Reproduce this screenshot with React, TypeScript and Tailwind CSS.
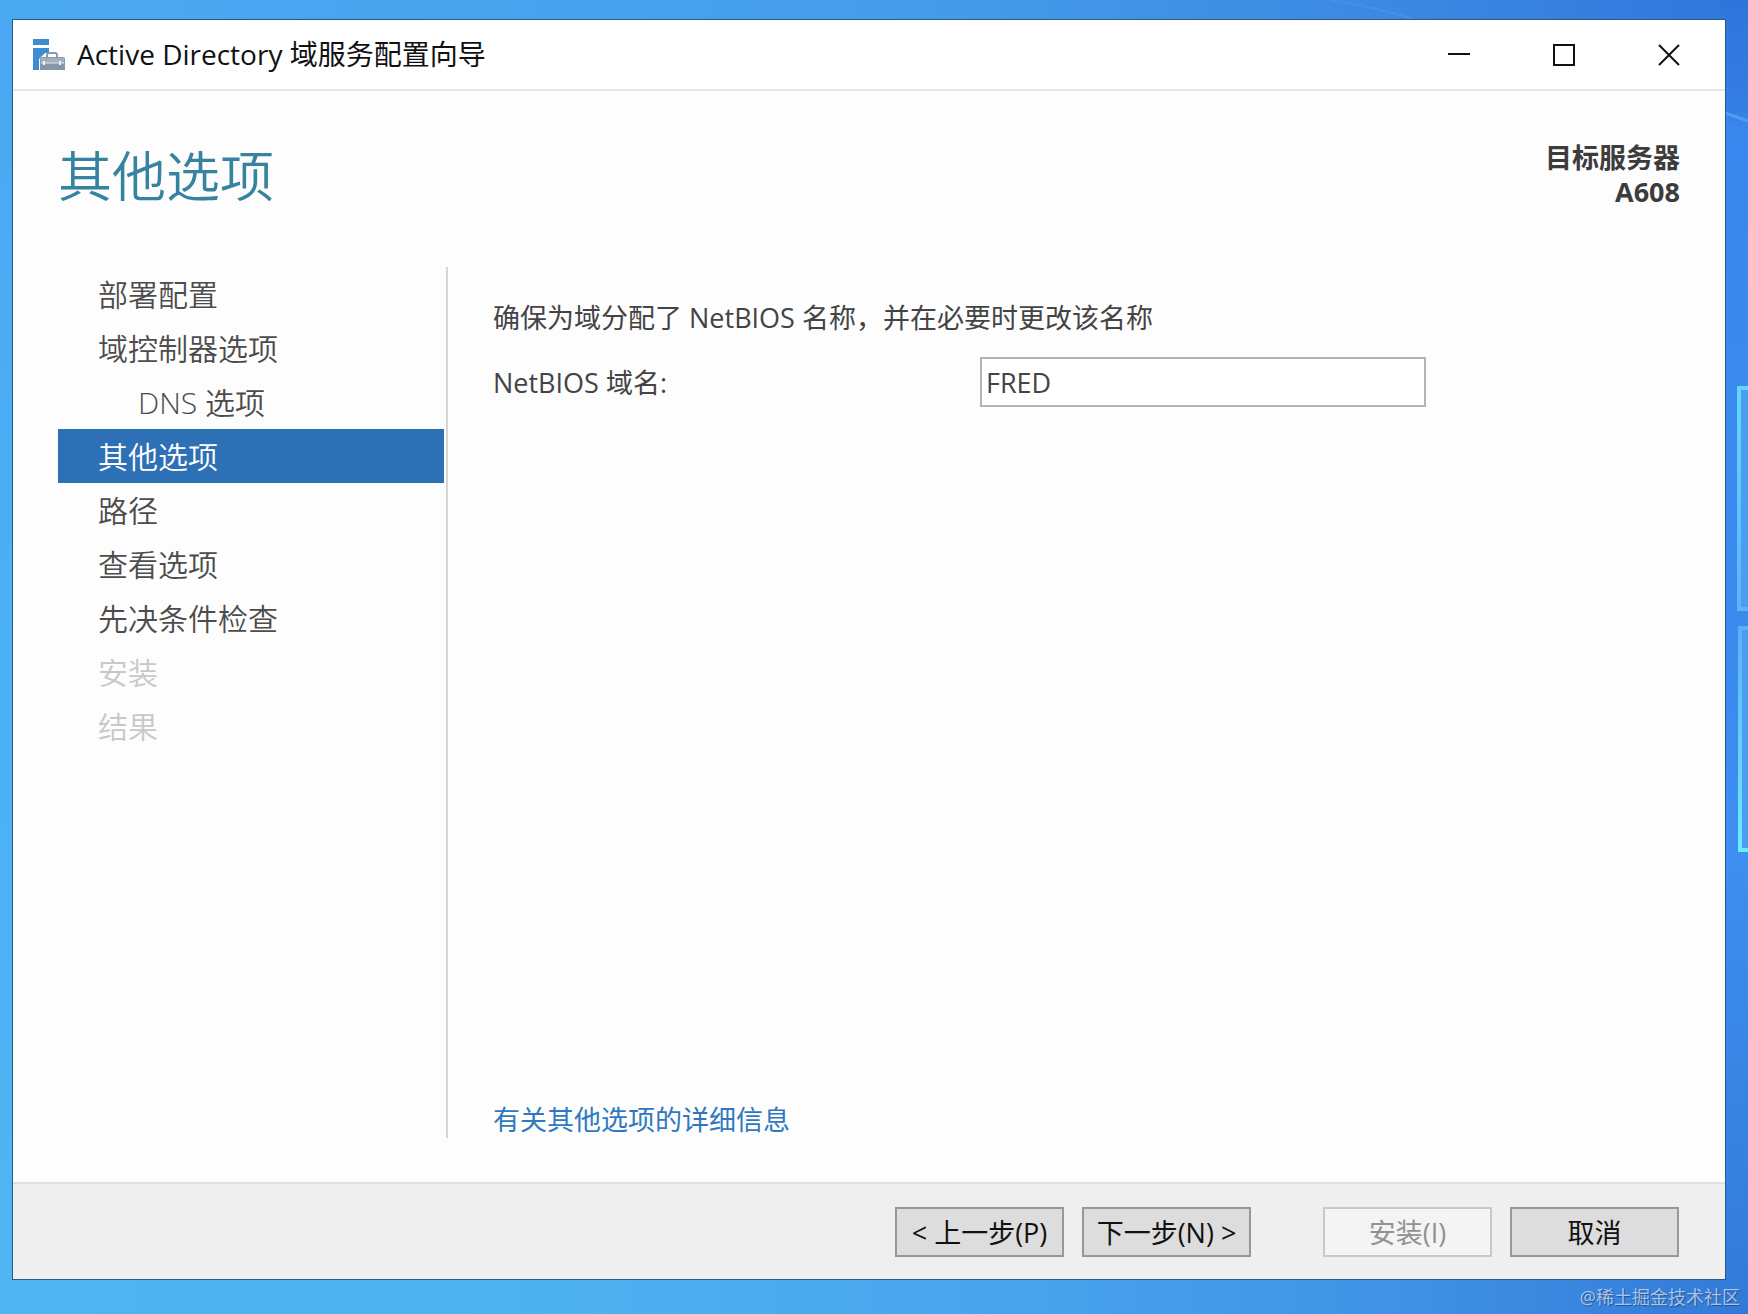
import React, { useState } from 'react'

const steps = [
    { name: '部署配置' },
    { name: '域控制器选项' },
    { name: 'DNS 选项', nested: true },
    { name: '其他选项' },
    { name: '路径' },
    { name: '查看选项' },
    { name: '先决条件检查' },
    { name: '安装', disabled: true },
    { name: '结果', disabled: true },
]

const Wallpaper = () => (
    <svg className="absolute inset-0 h-full w-full" viewBox="0 0 1748 1314" preserveAspectRatio="none" aria-hidden="true">
        <defs>
            <linearGradient id="sky" x1="0" y1="0" x2="1" y2="0">
                <stop offset="0" stopColor="#4ba9f2" />
                <stop offset="0.5" stopColor="#469eea" />
                <stop offset="0.8" stopColor="#3b88e2" />
                <stop offset="1" stopColor="#3176dc" />
            </linearGradient>
            <linearGradient id="ground" x1="0" y1="0" x2="1" y2="0">
                <stop offset="0" stopColor="#50b5f2" />
                <stop offset="0.33" stopColor="#4eb1f0" />
                <stop offset="0.6" stopColor="#48a2ec" />
                <stop offset="0.8" stopColor="#3f92e4" />
                <stop offset="1" stopColor="#337ad8" />
            </linearGradient>
            <linearGradient id="left" x1="0" y1="0" x2="0" y2="1">
                <stop offset="0" stopColor="#4ba7f1" />
                <stop offset="0.5" stopColor="#4bb1f7" />
                <stop offset="1" stopColor="#50b5f2" />
            </linearGradient>
            <linearGradient id="right" x1="0" y1="0" x2="0" y2="1">
                <stop offset="0" stopColor="#3075dc" />
                <stop offset="0.08" stopColor="#347de2" />
                <stop offset="0.1" stopColor="#3a88ef" />
                <stop offset="0.5" stopColor="#3b8bee" />
                <stop offset="0.65" stopColor="#3d8ff0" />
                <stop offset="1" stopColor="#337ad8" />
            </linearGradient>
            <linearGradient id="pane" x1="0" y1="0" x2="0" y2="1">
                <stop offset="0" stopColor="#62d8ff" />
                <stop offset="1" stopColor="#5cb4fb" />
            </linearGradient>
            <linearGradient id="pane2" x1="0" y1="0" x2="0" y2="1">
                <stop offset="0" stopColor="#5cb0fa" />
                <stop offset="1" stopColor="#6cecff" />
            </linearGradient>
        </defs>
        <rect width="1748" height="700" fill="url(#sky)" />
        <rect y="700" width="1748" height="614" fill="url(#ground)" />
        <rect y="19" width="20" height="1295" fill="url(#left)" />
        <rect x="1720" width="28" height="1314" fill="url(#right)" />
        <path d="M1330 0Q1370 6 1414 19" stroke="#4690e8" strokeWidth="2" fill="none" />
        <path d="M1725 113L1748 121" stroke="#529bf3" strokeWidth="3" fill="none" />
        <rect x="1739" y="388" width="40" height="221" fill="#4b9df0" stroke="url(#pane)" strokeWidth="4" />
        <rect x="1740" y="628" width="40" height="222" fill="#4b9df0" stroke="url(#pane2)" strokeWidth="4" />
    </svg>
)

const AppIcon = () => (
    <svg className="h-8 w-8" viewBox="0 0 32 32" aria-hidden="true">
        <rect width="16" height="6" fill="#3d8bd0" />
        <path d="M0 9H16V14H12L6 20V31H0Z" fill="#3d8bd0" />
        <path d="M14 18V16Q14 14 16 14H22Q24 14 24 16V18" fill="none" stroke="#8e9ba8" strokeWidth="2" />
        <path d="M9 18H30Q32 18 32 20V31H7V20Q7 18 9 18Z" fill="#8797a8" />
        <path d="M8 19H31V24H8Z" fill="#a3afbb" />
        <path d="M8 24H31" stroke="#dfe5ea" strokeWidth="1" />
        <path d="M11 22V26M27 22V26" stroke="#eef2f5" strokeWidth="2" />
    </svg>
)

const FooterButton = ({ children, disabled = false }) => (
    <button
        type="button"
        disabled={disabled}
        className="flex h-[50px] w-[169px] items-center justify-center whitespace-pre border-2 border-[#989898] bg-[#dddddd] pt-1 text-[27px] text-[#111111] disabled:border-[#c8c8c8] disabled:bg-[#f4f4f4] disabled:text-[#929292]"
    >
        {children}
    </button>
)

const App = () => {
    const [current, setCurrent] = useState('其他选项')
    const [netbios, setNetbios] = useState('FRED')

    return (
        <div lang="zh-CN" className="relative flex min-h-screen flex-col bg-[#469eea] pt-[19px] pr-[22px] pb-[34px] pl-3 font-['Open_Sans','Noto_Sans_CJK_SC',sans-serif]">
            <Wallpaper />
            <div className="relative flex flex-1 flex-col border border-[#2b5a80] bg-[#fdfdfd]">
                <header className="flex h-[71px] items-center border-b-2 border-[#e6e6e6] bg-white pr-1 pl-5">
                    <AppIcon />
                    <span className="ml-3 flex-1 pb-0.5 text-[28px] text-[#111111]">Active Directory 域服务配置向导</span>
                    <button type="button" aria-label="最小化" className="flex h-full w-[105px] items-center justify-center">
                        <svg className="h-[22px] w-[22px]" viewBox="0 0 22 22"><path d="M0 10H22" stroke="#111" strokeWidth="2" /></svg>
                    </button>
                    <button type="button" aria-label="最大化" className="flex h-full w-[105px] items-center justify-center">
                        <svg className="h-[22px] w-[22px]" viewBox="0 0 22 22"><rect x="1" y="1" width="20" height="20" fill="none" stroke="#111" strokeWidth="2" /></svg>
                    </button>
                    <button type="button" aria-label="关闭" className="flex h-full w-[105px] items-center justify-center">
                        <svg className="h-[22px] w-[22px]" viewBox="0 0 22 22"><path d="M1 1L21 21M21 1L1 21" stroke="#111" strokeWidth="2" /></svg>
                    </button>
                </header>

                <div className="flex justify-between px-[45px] pt-[50px] pb-14">
                    <h1 className="text-[54px] leading-[70px] font-[350] text-[#37829f]">其他选项</h1>
                    <div className="text-right text-[27px] leading-[34px] font-bold text-[#3c3c3c]">
                        <div>目标服务器</div>
                        <div>A608</div>
                    </div>
                </div>

                <main className="flex flex-1 px-[45px] pb-11">
                    <nav className="w-[390px] shrink-0 border-r-2 border-[#d6d6d6] pr-0.5">
                        {steps.map((s) => (
                            <button
                                key={s.name}
                                type="button"
                                disabled={s.disabled}
                                aria-current={s.name === current ? 'step' : undefined}
                                onClick={() => setCurrent(s.name)}
                                className={`block h-[54px] w-full text-left text-[30px] leading-[56px] font-[350] disabled:text-[#c8c8c8] ${s.nested ? 'pl-20' : 'pl-10'} ${s.name === current ? 'bg-[#2d70b6] text-white' : 'text-[#4c4c4c]'}`}
                            >
                                {s.name}
                            </button>
                        ))}
                    </nav>

                    <section className="flex flex-1 flex-col pl-[45px] text-[27px] leading-9 text-[#444444]">
                        <p className="mt-[33px]">确保为域分配了 NetBIOS 名称，并在必要时更改该名称</p>
                        <div className="mt-[21px] flex items-center">
                            <label htmlFor="netbios" className="w-[487px] pt-0.5">NetBIOS 域名:</label>
                            <input
                                id="netbios"
                                type="text"
                                value={netbios}
                                onChange={(e) => setNetbios(e.target.value)}
                                className="h-[50px] w-[446px] border-2 border-[#b4b4b4] bg-white px-1 outline-none"
                            />
                        </div>
                        <a href="#more" className="mt-auto self-start text-[#2f78bd]">有关其他选项的详细信息</a>
                    </section>
                </main>

                <footer className="flex h-[97px] items-center justify-end gap-[18px] border-t-2 border-[#e0e0e0] bg-[#efefef] px-[46px]">
                    <FooterButton>{'< 上一步(P)'}</FooterButton>
                    <FooterButton>{'下一步(N) >'}</FooterButton>
                    <div className="w-9" />
                    <FooterButton disabled>安装(I)</FooterButton>
                    <FooterButton>取消</FooterButton>
                </footer>
            </div>
            <span className="absolute right-2 bottom-1 text-[18px] leading-[26px] text-white/60 [text-shadow:1px_1px_1px_#1f4f96]">@稀土掘金技术社区</span>
        </div>
    )
}

export default App
